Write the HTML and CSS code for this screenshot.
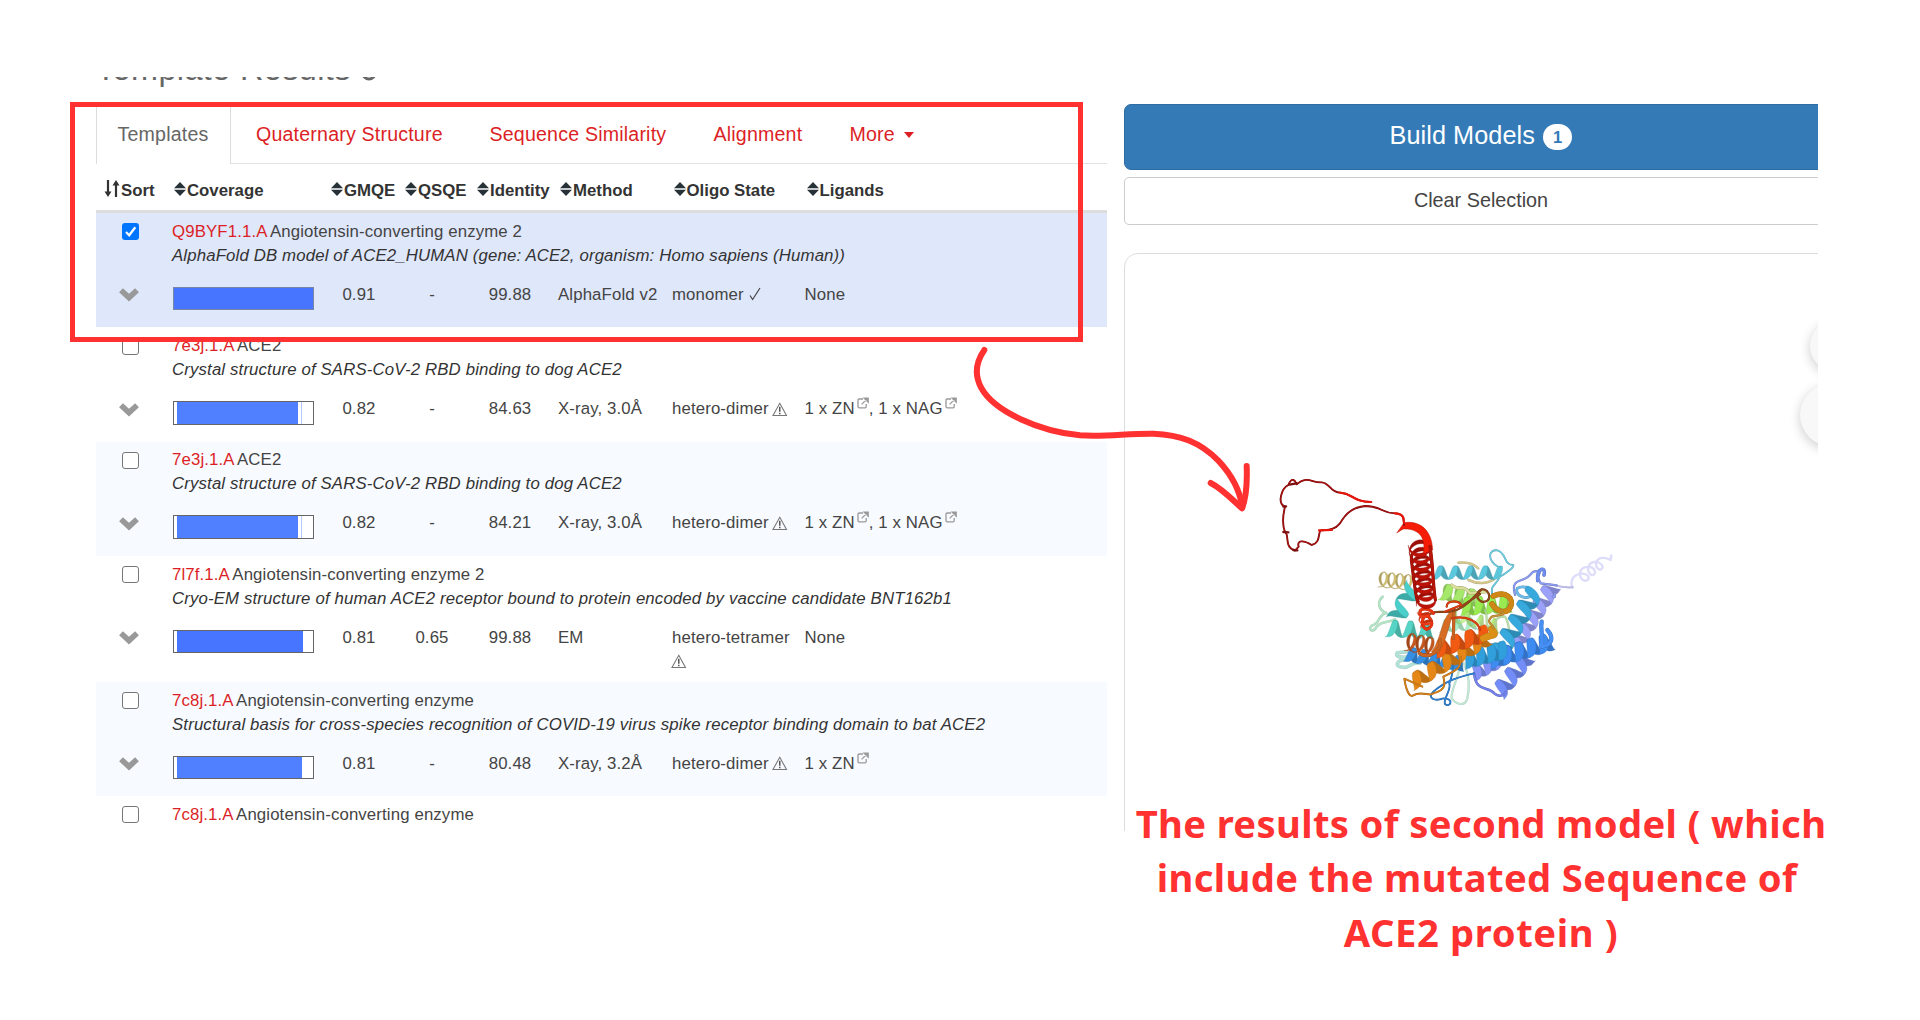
FILE: index.html
```html
<!DOCTYPE html>
<html lang="en">
<head>
<meta charset="utf-8">
<title>Template Results</title>
<link rel="stylesheet" href="styles.css">
</head>
<body>
<svg class="defs" width="0" height="0">
  <symbol id="sort" viewBox="0 0 12 14"><path d="M6 0 12 6.200H0zM6 14 0 7.800h12z" fill="#263238"/></symbol>
  <symbol id="chev" viewBox="0 0 22 15"><path d="M3 3.2 11 10.6 19 3.2" fill="none" stroke="#999" stroke-width="5.6"/></symbol>
  <symbol id="warn" viewBox="0 0 16 15"><path d="M8 1.4 15 13.9H1z" fill="none" stroke="#777" stroke-width="1.1"/><path d="M8 5v5M8 11v1.7" stroke="#555" stroke-width="1.6"/></symbol>
  <symbol id="ext" viewBox="0 0 12 12"><path d="M6 2H2.2Q1 2 1 3.200V9.600Q1 10.800 2.200 10.800H8Q9.200 10.800 9.200 9.600V7" fill="none" stroke="#999" stroke-width="1.300"/><path d="M4.600 7.400 10 2M7 1h4.200v4.200z" fill="#999" stroke="#999" stroke-width="1.200"/></symbol>
  <symbol id="tick" viewBox="0 0 12 14"><path d="M1 8.500 3.600 12.500 11 1" fill="none" stroke="#444" stroke-width="1.200"/></symbol>
</svg>
<main class="shot">
  <section class="results">
    <h1 class="heading"><span>Template Results</span><svg width="16" height="16"><circle cx="8" cy="8" r="6" fill="none" stroke="#666" stroke-width="3"/></svg></h1>
    <nav class="tabs">
      <a class="tab active">Templates</a><a class="tab t2">Quaternary Structure</a><a class="tab t3">Sequence Similarity</a><a class="tab t4">Alignment</a><a class="tab t5">More <i class="caret"></i></a>
    </nav>
    <div class="head">
      <span class="sortall"><svg width="16" height="19" viewBox="0 0 16 19"><path d="M4 1v15M12 3v15" stroke="#333" stroke-width="2.200"/><path d="M.5 12.500h7L4 18zM8.500 6.500h7L12 1z" fill="#333"/></svg>Sort</span>
      <span><svg><use href="#sort"/></svg>Coverage</span><span><svg><use href="#sort"/></svg>GMQE</span><span><svg><use href="#sort"/></svg>QSQE</span><span><svg><use href="#sort"/></svg>Identity</span><span><svg><use href="#sort"/></svg>Method</span><span><svg><use href="#sort"/></svg>Oligo State</span><span><svg><use href="#sort"/></svg>Ligands</span>
    </div>
    <article class="row selected">
      <span class="check on"><svg width="17" height="17"><path d="M4 9 7.200 12.200 13.300 4.300" fill="none" stroke="#fff" stroke-width="2.300"/></svg></span>
      <div class="title"><a>Q9BYF1.1.A</a> Angiotensin-converting enzyme 2</div>
      <div class="desc">AlphaFold DB model of ACE2_HUMAN (gene: ACE2, organism: Homo sapiens (Human))</div>
      <svg class="chev"><use href="#chev"/></svg>
      <div class="bar"><i style="width:141px"></i></div>
      <span class="num">0.91</span><span class="num">-</span><span class="num">99.88</span><span>AlphaFold v2</span><span>monomer <svg class="tick"><use href="#tick"/></svg></span><span>None</span>
    </article>
    <article class="row">
      <span class="check"></span>
      <div class="title"><a>7e3j.1.A</a> ACE2</div>
      <div class="desc">Crystal structure of SARS-CoV-2 RBD binding to dog ACE2</div>
      <svg class="chev"><use href="#chev"/></svg>
      <div class="bar part"><i style="width:121px"></i><b></b></div>
      <span class="num">0.82</span><span class="num">-</span><span class="num">84.63</span><span>X-ray, 3.0Å</span><span>hetero-dimer <svg class="warn"><use href="#warn"/></svg></span><span>1 x ZN<svg class="ext"><use href="#ext"/></svg>, 1 x NAG<svg class="ext"><use href="#ext"/></svg></span>
    </article>
    <article class="row alt">
      <span class="check"></span>
      <div class="title"><a>7e3j.1.A</a> ACE2</div>
      <div class="desc">Crystal structure of SARS-CoV-2 RBD binding to dog ACE2</div>
      <svg class="chev"><use href="#chev"/></svg>
      <div class="bar part"><i style="width:121px"></i><b></b></div>
      <span class="num">0.82</span><span class="num">-</span><span class="num">84.21</span><span>X-ray, 3.0Å</span><span>hetero-dimer <svg class="warn"><use href="#warn"/></svg></span><span>1 x ZN<svg class="ext"><use href="#ext"/></svg>, 1 x NAG<svg class="ext"><use href="#ext"/></svg></span>
    </article>
    <article class="row tall">
      <span class="check"></span>
      <div class="title"><a>7l7f.1.A</a> Angiotensin-converting enzyme 2</div>
      <div class="desc">Cryo-EM structure of human ACE2 receptor bound to protein encoded by vaccine candidate BNT162b1</div>
      <svg class="chev"><use href="#chev"/></svg>
      <div class="bar part"><i class="deep" style="width:126px"></i></div>
      <span class="num">0.81</span><span class="num">0.65</span><span class="num">99.88</span><span>EM</span><span>hetero-tetramer<br><svg class="warn"><use href="#warn"/></svg></span><span>None</span>
    </article>
    <article class="row alt">
      <span class="check"></span>
      <div class="title"><a>7c8j.1.A</a> Angiotensin-converting enzyme</div>
      <div class="desc">Structural basis for cross-species recognition of COVID-19 virus spike receptor binding domain to bat ACE2</div>
      <svg class="chev"><use href="#chev"/></svg>
      <div class="bar part"><i style="width:125px"></i></div>
      <span class="num">0.81</span><span class="num">-</span><span class="num">80.48</span><span>X-ray, 3.2Å</span><span>hetero-dimer <svg class="warn"><use href="#warn"/></svg></span><span>1 x ZN<svg class="ext"><use href="#ext"/></svg></span>
    </article>
    <article class="row last">
      <span class="check"></span>
      <div class="title"><a>7c8j.1.A</a> Angiotensin-converting enzyme</div>
    </article>
  </section>
  <aside class="side">
    <div class="build">Build Models <span class="badge">1</span></div>
    <div class="clear">Clear Selection</div>
    <div class="viewer">
      <i class="knob k1"></i><i class="knob k2"></i>
      <svg class="protein" id="protein" viewBox="0 0 1140 780"></svg>
    </div>
  </aside>
</main>
<div class="frame"></div>
<svg class="arrow" viewBox="0 0 900 540"><g fill="none" stroke="#ff3131" stroke-linecap="round" stroke-linejoin="round" stroke-width="18"><path d="M73 30C48 66 42 104 64 144C104 216 240 274 360 286C440 291 500 280 580 281C660 284 720 306 775 362C820 410 840 452 847 502"/><path d="M752 429C786 446 816 478 846 505C860 470 862 430 860 378"/></g></svg>
<p class="caption"><span class="c1">The results of second model ( which</span><br><span class="c2">include the mutated Sequence of</span><br><span class="c3">ACE2 protein )</span></p>
<script src="protein.js"></script>
</body>
</html>
```
FILE: styles.css
```css
body { margin: 0; width: 1920px; height: 1020px; position: relative; overflow: hidden; background: #fff; font-family: "Liberation Sans", Arial, sans-serif; color: #444; }
.defs { position: absolute; }
.shot { display: flex; gap: 17px; box-sizing: border-box; width: 1722px; height: 754px; margin: 77px 0 0 96px; overflow: hidden; }
.results { flex: none; width: 1011px; }
.heading { display: flex; align-items: flex-start; gap: 10px; margin: -26px 0 17px; height: 36px; font: 400 32.4px/36px "Liberation Sans", Arial, sans-serif; color: #666; letter-spacing: .4px; }
.heading svg { margin-top: 14px; }
.tabs { display: flex; box-sizing: border-box; height: 59.500px; border-bottom: 1px solid #e3e3e3; font-size: 19.6px; line-height: 60px; letter-spacing: .19px; color: #dc1f26; }
.tab { white-space: nowrap; }
.active { box-sizing: border-box; width: 135px; height: 59.500px; padding-left: 20.500px; border: solid #ddd; border-width: 1px 1px 0; background: #fff; color: #666; line-height: 58px; }
.t2 { margin-left: 25px; width: 233.500px; }
.t3 { width: 224px; }
.t4 { width: 136px; }
.caret { display: inline-block; vertical-align: 3px; margin-left: 3px; border: solid transparent; border-width: 6px 5.500px 0; border-top-color: #dc1f26; }
.head { display: grid; grid-template-columns: 70px 157px 74px 72px 83px 113.500px 133px 1fr; box-sizing: border-box; height: 49.500px; padding: 7.500px 0 0 8px; border-bottom: 3.300px solid #ddd; font-weight: 700; font-size: 16.8px; line-height: 38px; color: #333; }
.head span { display: flex; align-items: center; gap: 1px; white-space: nowrap; }
.head span > svg { width: 12px; height: 14px; margin-top: -3px; }
.head .sortall > svg { width: 16px; height: 19px; margin-top: -5px; }
.row { display: grid; grid-template-columns: 76px 158px 58px 88px 68px 128px 132.500px 1fr; grid-template-rows: 24px 38px 1fr; box-sizing: border-box; height: 114.250px; padding-top: 6.800px; font-size: 16.8px; line-height: 24px; letter-spacing: .13px; white-space: nowrap; }
.row > span { align-self: start; padding-top: 1px; }
.row > .check { grid-row: 1; grid-column: 1; box-sizing: border-box; width: 17px; height: 17px; margin: 3.500px 0 0 25.500px; padding: 0; border: 1.400px solid #767676; border-radius: 3px; background: #fff; }
.row > .check.on { border: 0; background: #0075ff; }
.check svg { display: block; }
.title, .desc { grid-column: 2 / -1; }
.title a { color: #dc1f26; margin-right: -1.500px; }
.desc { font-style: italic; color: #333; letter-spacing: .145px; }
.selected { background: #dfe7fb; }
.alt { background: #f7faff; }
.tall { height: 126px; }
.chev { width: 22px; height: 15px; margin: 5.500px 0 0 22px; }
.bar { position: relative; box-sizing: border-box; width: 141px; height: 23.500px; margin: 5px 0 0 1px; border: 1px solid #7785a8; background: #4775ff; overflow: hidden; }
.part { display: flex; padding-left: 3px; border-color: #666; background: #fff; gap: 2.500px; }
.bar i { display: block; height: 100%; background: #5080ff; }
.selected .bar i { background: #4775ff; }
.bar i.deep { background: #4775ff; }
.bar b { width: 1px; background: #b5c8ff; }
.num { text-align: center; }
.num + span:not(.num) { margin-left: 14px; }
.warn { width: 15.500px; height: 14.500px; vertical-align: -2px; margin-left: -1px; }
.tick { width: 12px; height: 14px; vertical-align: -1px; }
.ext { width: 12px; height: 12px; margin-left: 2px; vertical-align: 5px; }
.side { flex: none; width: 714px; padding-top: 27px; }
.build { display: flex; align-items: center; justify-content: center; gap: 8px; box-sizing: border-box; height: 65.500px; border: 1px solid #2e6da4; border-radius: 7px; background: #337ab7; color: #fff; font-size: 25.3px; letter-spacing: .05px; padding-bottom: 3px; }
.badge { width: 29.500px; height: 26px; border-radius: 13px; background: #fff; color: #337ab7; font: 700 16.500px/26px "Liberation Sans", Arial, sans-serif; text-align: center; margin-top: 3px; }
.clear { box-sizing: border-box; height: 48px; margin-top: 7.500px; border: 1px solid #ccc; border-radius: 5px; text-align: center; font-size: 19.8px; line-height: 45.500px; color: #444; }
.viewer { position: relative; box-sizing: border-box; height: 640px; margin-top: 28px; border: 1px solid #ddd; border-radius: 14px; }
.knob { position: absolute; border-radius: 50%; background: #f8f8f8; box-shadow: 0 3px 12px rgba(0,0,0,.2); }
.k1 { left: 685px; top: 66px; width: 52px; height: 52px; }
.k2 { left: 675px; top: 130px; width: 62px; height: 62px; }
.protein { position: absolute; left: 135px; top: 206px; width: 380px; height: 260px; }
.frame { position: absolute; left: 70px; top: 102px; box-sizing: border-box; width: 1013px; height: 240px; border: 5.600px solid #ff3131; }
.arrow { position: absolute; left: 960px; top: 340px; width: 300px; height: 180px; }
.caption { position: absolute; left: 1124px; top: 795.500px; width: 714px; margin: 0; text-align: center; font: 700 38.2px/54.600px "Noto Sans", sans-serif; letter-spacing: .35px; color: #ff3131; white-space: nowrap; }
.c2 { margin-left: -8px; }
.c3 { letter-spacing: .6px; }
```
FILE: protein.js
```js
// Ribbon cartoon of the model: helices as shaded ribbons, loops as thin tubes.
const svg = document.getElementById('protein');
const add = (d, fill, stroke, w, op) => {
  const p = document.createElementNS('http://www.w3.org/2000/svg', 'path');
  p.setAttribute('d', d);
  p.setAttribute('fill', fill);
  p.setAttribute('stroke', stroke);
  p.setAttribute('stroke-width', w);
  p.setAttribute('stroke-linejoin', 'round');
  p.setAttribute('stroke-linecap', 'round');
  if (op) p.setAttribute('opacity', op);
  svg.appendChild(p);
};
const shade = (hex, k) => '#' + [1, 3, 5].map(i => Math.min(255, Math.round(parseInt(hex.substr(i, 2), 16) * k)).toString(16).padStart(2, '0')).join('');
const helix = (x1, y1, x2, y2, amp, turns, w, c, k = 0.25, op = 1) => {
  const L = Math.hypot(x2 - x1, y2 - y1), ux = (x2 - x1) / L, uy = (y2 - y1) / L;
  const half = (a, b, col) => {
    const up = [], dn = [];
    for (let i = 0; i <= 14; i++) {
      const th = a + (b - a) * i / 14, t = th / (turns * 2 * Math.PI);
      const s = L * t + k * amp * Math.sin(th), n = amp * Math.cos(th);
      const x = x1 + ux * s - uy * n, y = y1 + uy * s + ux * n;
      const ww = w * (0.45 + 0.55 * Math.abs(Math.sin(th))) / 2;
      up.push((x + ux * ww).toFixed(1) + ',' + (y + uy * ww).toFixed(1));
      dn.unshift((x - ux * ww).toFixed(1) + ',' + (y - uy * ww).toFixed(1));
    }
    add('M' + up.concat(dn).join('L') + 'Z', col, shade(c, 0.78), 1, op);
  };
  const n = Math.round(turns * 2);
  for (let j = 1; j < n; j += 2) half(j * Math.PI, (j + 1) * Math.PI, shade(c, 0.82));
  for (let j = 0; j < n; j += 2) half(j * Math.PI, (j + 1) * Math.PI, c);
};
const loop = (d, c, w = 4, op) => { add(d, 'none', shade(c, 0.75), w + 1.5, op); add(d, 'none', c, w - 0.5, op); };

// far side
add('M938 382C930 370 936 350 950 345C970 335 990 345 985 358C975 368 958 358 960 338C965 315 1000 315 1005 335C1005 350 988 350 984 328C985 300 1020 300 1028 320C1025 335 1008 330 1008 310C1012 290 1035 290 1052 300L1054 286', 'none', '#d2d2f8', 7, 0.75);
loop('M888 377C905 380 915 384 938 382', '#c3c3fa', 4, 0.8);
loop('M595 308C620 305 640 310 655 325M625 360C650 372 680 372 702 358', '#ddd08c', 6, 0.8);
helix(358, 358, 455, 368, 23, 4, 7, '#d6c373', 0.7);
loop('M380 460C355 450 350 425 368 410M378 458C350 470 362 490 335 497C322 510 340 520 350 500C370 480 385 490 405 478', '#b5f0cb', 6, 0.7);
loop('M440 575L412 578C402 590 425 595 445 590M440 600C410 598 400 620 430 622C450 625 450 605 480 610', '#b4ecdf', 9, 0.7);
loop('M600 600C605 640 570 690 575 715C590 735 615 740 622 715C630 680 625 640 612 610', '#c6f5de', 5, 0.7);
helix(520, 338, 722, 338, 20, 4.5, 19, '#5bc8de');
loop('M716 322C680 300 685 268 712 271C740 278 730 315 760 315C765 322 730 345 720 350C705 380 690 375 697 405', '#70d0e4', 4);
helix(462, 378, 405, 480, 27, 2, 22, '#4bcfcb');
helix(382, 505, 520, 512, 25, 3, 20, '#56d5c6');
helix(540, 500, 650, 490, 18, 3, 15, '#9cedbc', 0.3, 0.8);
helix(545, 395, 650, 415, 25, 3, 25, '#a5e86a', 0.4);
helix(605, 440, 750, 430, 27, 4, 24, '#9aea52');
helix(560, 460, 720, 500, 20, 4, 14, '#b4ef77', 0.3, 0.75);
loop('M575 375C595 395 610 370 630 400L680 395', '#d9dd98', 8);
loop('M675 450C688 475 670 490 690 505C720 500 690 470 735 470C750 490 745 520 755 545', '#bde8a5', 5, 0.7);

// blue domain
helix(762, 560, 878, 378, 25, 5, 25, '#9ba0f8');
loop('M765 405C750 350 790 370 810 345C825 325 850 335 832 350L842 370L890 376M885 410C870 402 885 425 885 400', '#8d9cf3', 5);
loop('M833 362C830 320 860 320 852 345', '#6e8def', 9);
loop('M772 385C790 375 820 385 820 405C800 420 770 410 770 390', '#6fbcea', 7);
helix(710, 590, 822, 398, 28, 4.5, 25, '#38a9dc');
helix(640, 640, 760, 575, 24, 4, 24, '#8492f7');
helix(715, 698, 802, 590, 26, 3, 25, '#738df8');
loop('M642 640C650 700 680 675 705 702C720 712 735 705 738 695', '#7582ed', 6);
helix(690, 600, 872, 545, 27, 5, 28, '#3e8cf2');
loop('M862 510C880 530 880 555 845 560C850 525 840 510 845 485', '#468ff5', 11);
helix(615, 600, 730, 570, 27, 3.5, 27, '#319fdc');
helix(440, 582, 610, 612, 22, 5, 24, '#358ee1');
loop('M642 640C600 650 560 660 520 695C500 715 525 725 550 715C585 715 570 745 555 732C548 718 575 690 568 670C580 640 580 620 578 605', '#3181d3', 4);

// orange and brown domain
helix(440, 545, 520, 560, 27, 3, 9, '#c5571d', 0.6);
helix(455, 668, 680, 535, 24, 5, 28, '#e48716');
loop('M487 680L433 656C438 690 448 712 458 707C485 690 510 712 520 700C560 690 555 670 550 650C595 630 605 620 602 590', '#d78119', 4.5);
helix(528, 570, 675, 520, 25, 3.5, 30, '#f15a12');
loop('M670 535C700 520 712 530 695 508', '#db9117', 20);
add('M515 575C545 535 540 490 570 455L580 458C565 500 560 540 535 580Z', '#d76d24', '#a64a18', 1.500);
loop('M582 450L580 535M478 580C510 600 545 570 540 540', '#cc6422', 8);
loop('M700 408C740 390 762 418 752 440C740 465 710 455 696 432', '#cf8816', 15);
loop('M725 450L730 463L695 470C675 490 700 490 700 505', '#c89336', 5);
loop('M500 470C530 440 555 470 600 445C630 430 645 405 665 388C690 385 700 430 665 425C645 415 650 395 665 388M600 442L660 402', '#92481a', 5);
loop('M560 440C560 420 595 420 604 435L555 455M575 475C620 465 655 485 660 510', '#dc3f12', 5);
loop('M505 462C485 465 480 500 500 508C525 500 520 465 480 462C475 440 510 445 520 460', '#ec3512', 8);
helix(490, 455, 500, 500, 18, 2, 8, '#f03b18', 0.5);

// red N-terminal helix and its tail
helix(475, 255, 499, 432, 30, 8, 12, '#bd1207', 0.85);
add('M411 218L432 188C470 182 515 200 518 270L490 282C500 225 470 205 430 207Z', '#f51b05', '#b51507', 1.500);
loop('M510 260C520 320 518 370 526 420', '#b81408', 8);
loop('M455 285C452 315 460 330 460 355C467 380 462 400 475 425', '#ad1408', 7);
loop('M432 195C430 180 436 162 405 160C365 160 365 138 315 138C280 143 260 155 240 190C220 215 195 208 180 212C175 230 178 250 155 255C130 240 110 240 116 260L105 272C70 260 90 225 75 216C65 190 70 160 75 140C50 130 65 85 85 75C95 50 105 60 110 73C145 45 155 70 185 67C210 68 210 98 240 98C280 100 275 125 330 126', '#a51212', 4);
add('M70 140L78 139M70 216L85 217M88 74L110 70M100 270L112 271', 'none', '#7d0f0f', 7);
add('M240 98C280 100 275 125 334 126M177 211L216 210M432 188C430 180 436 162 405 160', 'none', '#e8170d', 6.5);
```
